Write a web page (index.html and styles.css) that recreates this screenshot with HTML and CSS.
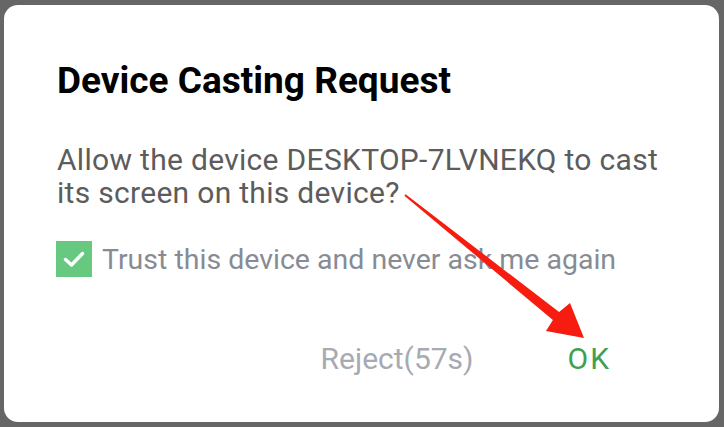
FILE: index.html
```html
<!DOCTYPE html>
<html>
<head>
<meta charset="utf-8">
<link rel="stylesheet" href="styles.css">
</head>
<body>
<div class="dialog">
  <h1 class="title">Device Casting Request</h1>
  <p class="message">Allow the device DESKTOP-7LVNEKQ to cast its screen on this device?</p>
  <div class="trust">
    <span class="checkbox">
      <svg width="36" height="36" viewBox="0 0 36 36"><path d="M9.5 18.5 L15.5 24 L26.5 12.5" fill="none" stroke="#fff" stroke-width="3.4" stroke-linecap="round" stroke-linejoin="round"/></svg>
    </span>
    <span class="trust-label">Trust this device and never ask me again</span>
  </div>
  <div class="actions">
    <span class="btn reject">Reject(57s)</span>
    <span class="btn ok">OK</span>
  </div>
  <svg class="arrow" width="724" height="427" viewBox="0 0 724 427"><polygon points="405.6,194.2 559.1,312.1 570,303 584,338 546,331 552.9,319.9 404.4,195.8" fill="#f61c10"/></svg>
</div>
</body>
</html>
```

FILE: styles.css
```css
html, body {
  margin: 0;
  padding: 0;
}
body {
  background: #666666;
  width: 724px;
  height: 427px;
  overflow: hidden;
  padding: 5px 5px 5px 4px;
  box-sizing: border-box;
}
.dialog {
  position: relative;
  background: #ffffff;
  width: 715px;
  height: 417px;
  border-radius: 14px;
  box-sizing: border-box;
  padding: 0 0 0 53px;
  font-family: Roboto, "Noto Sans", sans-serif;
}
.title {
  margin: 0;
  padding-top: 54px;
  font-size: 37px;
  line-height: 44px;
  font-weight: 700;
  color: #000;
}
.message {
  margin: 0;
  padding-top: 40px;
  width: 640px;
  font-size: 30px;
  line-height: 33px;
  letter-spacing: 0.3px;
  color: #5c5c5c;
}
.trust {
  display: flex;
  align-items: center;
  gap: 10px;
  margin-top: 32px;
  height: 36px;
}
.checkbox {
  width: 36px;
  height: 36px;
  margin-left: -1px;
  background: #67c980;
  display: block;
}
.checkbox svg { display: block; }
.trust-label {
  font-size: 28.5px;
  color: #878b93;
}
.actions {
  display: flex;
  justify-content: flex-end;
  gap: 94px;
  padding-right: 108px;
  margin-top: 64px;
  font-size: 30px;
  line-height: 36px;
}
.reject { color: #a7aab2; }
.ok { color: #3f9f53; letter-spacing: 2px; }
.arrow {
  position: absolute;
  left: -4px;
  top: -5px;
  pointer-events: none;
}
```
